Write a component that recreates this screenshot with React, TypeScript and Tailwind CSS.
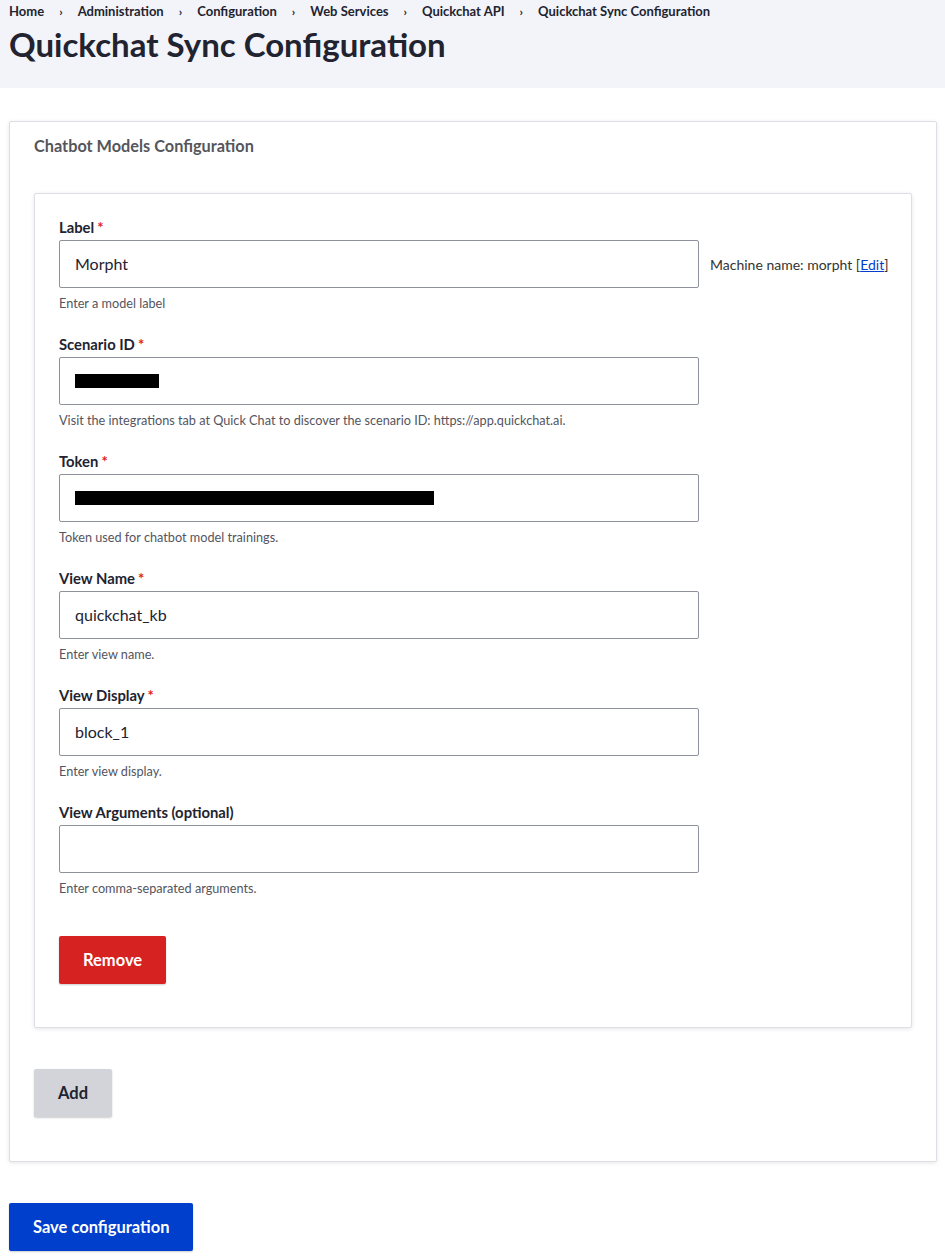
import React from 'react';

const font = "font-['Lato','Noto_Sans',sans-serif]";

const Field: React.FC<{
  label: string;
  required?: boolean;
  value?: React.ReactNode;
  help: string;
  aside?: React.ReactNode;
  last?: boolean;
}> = ({ label, required, value, help, aside, last }) => (
  <div className={last ? '' : 'mb-[24px]'}>
    <div className="h-[18px] text-[14.8px] leading-[18px] font-bold text-[#222330]">
      {label}
      {required && <span className="ml-[3px] text-[#dc2323]">*</span>}
    </div>
    <div className="mt-[4px] flex items-center">
      <div className="flex h-[48px] w-[640px] shrink-0 items-center rounded-[2px] border border-[#8e929c] bg-white px-[15px] text-[16px] text-[#222330]">
        {value}
      </div>
      {aside}
    </div>
    <div className="mt-[7px] h-[16px] text-[12.7px] leading-[16px] text-[#545560]">{help}</div>
  </div>
);

const Redacted: React.FC<{ w: number }> = ({ w }) => (
  <div className="h-[14px] bg-black" style={{ width: w }} />
);

const App: React.FC = () => {
  const crumbs = ['Home', 'Administration', 'Configuration', 'Web Services', 'Quickchat API', 'Quickchat Sync Configuration'];
  return (
    <div className={`min-h-screen w-full bg-white ${font}`}>
      <header className="h-[88px] bg-[#f3f4f9] px-[9px]">
        <nav className="flex h-[24px] items-center text-[13px] font-bold text-[#222330]">
          {crumbs.map((c, i) => (
            <React.Fragment key={c}>
              {i > 0 && <span className="mx-[15px] text-[12px]">›</span>}
              <span>{c}</span>
            </React.Fragment>
          ))}
        </nav>
        <h1 className="text-[33px] leading-[40px] font-bold text-[#222330]">
          Quickchat Sync Configuration
        </h1>
      </header>

      <main className="px-[9px] pt-[33px] pb-[9px]">
        <section className="w-[928px] rounded-[2px] border border-[#dedfe4] bg-white px-[24px] pt-[14px] pb-[44px] shadow-[0_1px_4px_rgba(0,0,0,0.1)]">
          <h2 className="h-[20px] text-[16.3px] leading-[20px] font-bold text-[#55565b]">Chatbot Models Configuration</h2>

          <div className="mt-[37px] rounded-[2px] border border-[#dedfe4] bg-white px-[24px] pt-[24px] pb-[43px] shadow-[0_1px_4px_rgba(0,0,0,0.1)]">
            <Field
              label="Label"
              required
              value="Morpht"
              help="Enter a model label"
              aside={
                <span className="ml-[11px] whitespace-nowrap text-[14px] text-[#333]">
                  Machine name: morpht [<a className="text-[#003ecc] underline">Edit</a>]
                </span>
              }
            />
            <Field
              label="Scenario ID"
              required
              value={<Redacted w={84} />}
              help="Visit the integrations tab at Quick Chat to discover the scenario ID: https://app.quickchat.ai."
            />
            <Field label="Token" required value={<Redacted w={359} />} help="Token used for chatbot model trainings." />
            <Field label="View Name" required value="quickchat_kb" help="Enter view name." />
            <Field label="View Display" required value="block_1" help="Enter view display." />
            <Field label="View Arguments (optional)" value="" help="Enter comma-separated arguments." last />

            <button className="mt-[40px] h-[48px] rounded-[2px] bg-[#d72222] px-[24px] text-[16.5px] font-bold text-white shadow-[0_1px_2px_rgba(0,0,0,0.2)]">
              Remove
            </button>
          </div>

          <button className="mt-[41px] h-[48px] rounded-[2px] bg-[#d3d4d9] px-[24px] text-[16.5px] font-bold text-[#222330] shadow-[0_1px_2px_rgba(0,0,0,0.2)]">
            Add
          </button>
        </section>

        <button className="mt-[41px] h-[48px] rounded-[2px] bg-[#003ecc] px-[24px] text-[16.5px] font-bold text-white shadow-[0_1px_2px_rgba(0,0,0,0.2)]">
          Save configuration
        </button>
      </main>
    </div>
  );
};

export default App;
